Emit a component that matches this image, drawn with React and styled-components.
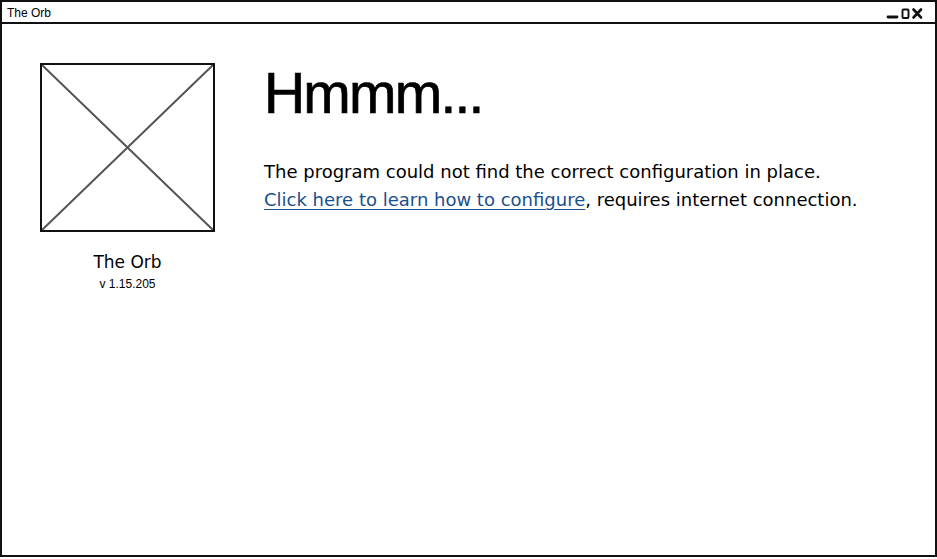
import React from 'react';
import styled, { createGlobalStyle } from 'styled-components';

const GlobalStyle = createGlobalStyle`
  html, body {
    margin: 0;
    padding: 0;
    background: #ffffff;
  }
  * {
    box-sizing: border-box;
  }
`;

const Window = styled.div`
  width: 937px;
  height: 557px;
  border: 2px solid #111;
  display: flex;
  flex-direction: column;
  background: #fff;
  font-family: "Liberation Sans", Arial, sans-serif;
  color: #000;
`;

const TitleBar = styled.div`
  height: 22px;
  border-bottom: 2px solid #111;
  display: flex;
  align-items: center;
  justify-content: space-between;
  padding: 0 6px 0 5px;
`;

const Title = styled.span`
  font-size: 12px;
  line-height: 1;
  padding-top: 1px;
`;

const Controls = styled.div`
  display: flex;
  align-items: center;
  padding-top: 1px;
`;

const Body = styled.div`
  flex: 1;
  display: flex;
  padding: 39px 0 0 38px;
  gap: 49px;
`;

const Sidebar = styled.div`
  width: 175px;
  display: flex;
  flex-direction: column;
  align-items: center;
`;

const Placeholder = styled.svg`
  display: block;
  width: 175px;
  height: 169px;
`;

const AppName = styled.div`
  margin-top: 19px;
  font-family: "DejaVu Sans", sans-serif;
  font-size: 17px;
  line-height: 22px;
`;

const Version = styled.div`
  margin-top: 4px;
  font-size: 12px;
  line-height: 14px;
`;

const Content = styled.div`
  display: flex;
  flex-direction: column;
`;

const Heading = styled.h1`
  margin: 0;
  font-size: 57px;
  font-weight: normal;
  line-height: 60px;
  letter-spacing: -1.8px;
  -webkit-text-stroke: 0.7px #000;
`;

const Message = styled.p`
  margin: 35px 0 0 0;
  font-family: "DejaVu Sans", sans-serif;
  font-size: 18px;
  line-height: 28px;
`;

const Link = styled.a`
  color: #1a4f8f;
  text-decoration: underline;
  text-underline-offset: 3px;
  cursor: pointer;
`;

const WindowControls = () => (
  <Controls>
    <svg width="44" height="14" viewBox="0 0 44 14">
      <line x1="3" y1="11" x2="12" y2="11" stroke="#111" strokeWidth="2.8" strokeLinecap="round" />
      <rect x="17.5" y="3.5" width="6" height="8.5" rx="1" fill="none" stroke="#111" strokeWidth="1.9" />
      <path d="M28.5 3.5 L36 11.5 M36 3.5 L28.5 11.5" stroke="#111" strokeWidth="2.6" strokeLinecap="round" />
    </svg>
  </Controls>
);

const App = () => {
  return (
    <>
      <GlobalStyle />
      <Window>
        <TitleBar>
          <Title>The Orb</Title>
          <WindowControls />
        </TitleBar>
        <Body>
          <Sidebar>
            <Placeholder viewBox="0 0 175 169">
              <line x1="2" y1="2" x2="173" y2="167" stroke="#555" strokeWidth="2" />
              <line x1="173" y1="2" x2="2" y2="167" stroke="#555" strokeWidth="2" />
              <rect x="1" y="1" width="173" height="167" fill="none" stroke="#111" strokeWidth="2" />
            </Placeholder>
            <AppName>The Orb</AppName>
            <Version>v 1.15.205</Version>
          </Sidebar>
          <Content>
            <Heading>Hmmm...</Heading>
            <Message>
              The program could not find the correct configuration in place.
              <br />
              <Link>Click here to learn how to configure</Link>, requires internet connection.
            </Message>
          </Content>
        </Body>
      </Window>
    </>
  );
};

export default App;
